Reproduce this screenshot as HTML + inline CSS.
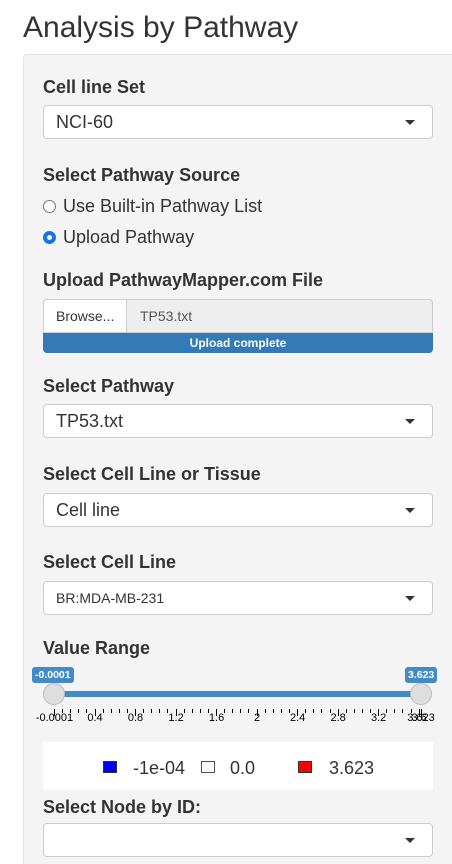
<!DOCTYPE html>
<html style="overflow:hidden;height:864px"><head><meta charset="utf-8"><style>
*{box-sizing:border-box;margin:0;padding:0}
body{width:452px;height:864px;overflow:hidden;background:#fff;font-family:"Liberation Sans",Arial,sans-serif;color:#333;position:relative}
.a{position:absolute}
h1{position:absolute;left:23px;top:11px;font-size:30px;font-weight:normal;white-space:nowrap}
.panel{position:absolute;left:23px;top:54px;width:440px;height:810px;background:#f4f4f4;border:1px solid #e3e3e3;border-bottom:none;border-radius:4px 4px 0 0}
.lbl{position:absolute;left:43px;font-weight:bold;font-size:18px;white-space:nowrap}
.sel{position:absolute;left:43px;width:390px;height:34px;background:#fff;border:1px solid #ccc;border-radius:4px;font-size:18px;padding:6px 12px;line-height:20px}
.sel:after{content:"";position:absolute;right:17px;top:14px;border-left:5px solid transparent;border-right:5px solid transparent;border-top:5px solid #333}
.radio{position:absolute;left:43px;font-size:18px;white-space:nowrap}
.radio i{display:inline-block;width:13px;height:13px;border-radius:50%;border:1px solid #777;background:#fff;vertical-align:-1px;margin-right:7px}
.tick{position:absolute;top:709px;width:1px;background:#000}
.tl{position:absolute;top:710px;font-size:11px;color:#000;transform:translateX(-50%)}
.tip{position:absolute;top:667px;height:16px;background:#428bca;color:#fff;font-size:10.5px;font-weight:bold;line-height:16px;padding:0 3px;border-radius:3px}
.h{position:absolute;top:683px;width:22px;height:22px;border-radius:50%;background:#dedede;border:1px solid #bbb}
</style></head><body>
<h1>Analysis by Pathway</h1>
<div class="panel"></div>
<div class="lbl" style="top:77px">Cell line Set</div>
<div class="sel" style="top:105px">NCI-60</div>
<div class="lbl" style="top:165px">Select Pathway Source</div>
<div class="radio" style="top:196px"><i></i>Use Built-in Pathway List</div>
<div class="radio" style="top:227px"><i style="border:4px solid #1a73e8"></i>Upload Pathway</div>
<div class="lbl" style="top:270px">Upload PathwayMapper.com File</div>
<div class="a" style="left:43px;top:299px;width:390px;height:34px;border:1px solid #ccc;border-radius:4px 4px 0 0;background:#eee"></div>
<div class="a" style="left:43px;top:299px;width:84px;height:34px;border:1px solid #ccc;background:#fff;font-size:14px;padding:8px 12px;border-radius:4px 0 0 0">Browse...</div>
<div class="a" style="left:140px;top:308px;font-size:14px;color:#555">TP53.txt</div>
<div class="a" style="left:43px;top:333px;width:390px;height:20px;background:#337ab7;border-radius:0 0 4px 4px;color:#fff;font-size:12px;font-weight:bold;text-align:center;line-height:20px">Upload complete</div>
<div class="lbl" style="top:376px">Select Pathway</div>
<div class="sel" style="top:404px">TP53.txt</div>
<div class="lbl" style="top:464px">Select Cell Line or Tissue</div>
<div class="sel" style="top:493px">Cell line</div>
<div class="lbl" style="top:552px">Select Cell Line</div>
<div class="sel" style="top:581px;font-size:14px;line-height:20px">BR:MDA-MB-231</div>
<div class="lbl" style="top:638px">Value Range</div>
<div class="a" style="left:54px;top:691px;width:367px;height:6px;background:#428bca"></div>
<div id="ticks"></div>
<div class="tip" style="left:32px">-0.0001</div>
<div class="tip" style="left:405px">3.623</div>
<div class="h" style="left:43px"></div>
<div class="h" style="left:410px"></div>
<div class="a" style="left:43px;top:742px;width:390px;height:48px;background:#fff"></div>
<div class="a" style="left:103px;top:761px;width:14px;height:12px;background:#00f;border:1px solid #333"></div>
<div class="a" style="left:133px;top:758px;font-size:18px">-1e-04</div>
<div class="a" style="left:201px;top:761px;width:14px;height:12px;background:#fff;border:1px solid #555"></div>
<div class="a" style="left:230px;top:758px;font-size:18px">0.0</div>
<div class="a" style="left:298px;top:761px;width:14px;height:12px;background:#f00;border:1px solid #333"></div>
<div class="a" style="left:329px;top:758px;font-size:18px">3.623</div>
<div class="lbl" style="top:797px">Select Node by ID:</div>
<div class="sel" style="top:823px"></div>
<script>
var t=document.getElementById('ticks'),h='';
var x0=54,x1=421,max=3.623,s=(x1-x0)/max;
for(var v=0;v<=3.61;v+=0.08){var x=x0+v*s;var maj=Math.abs(v/0.4-Math.round(v/0.4))<0.01;
h+='<div class="tick" style="left:'+Math.round(x)+'px;height:'+(maj?7:4)+'px"></div>';
if(maj){var l=v<0.01?'-0.0001':(+v.toFixed(1)).toString();h+='<div class="tl" style="left:'+(x+0.5)+'px;top:712px">'+l+'</div>';}}
h+='<div class="tick" style="left:421px;height:7px"></div><div class="tl" style="left:421px;top:712px">3.623</div>';
t.innerHTML=h;
</script>
</body></html>
